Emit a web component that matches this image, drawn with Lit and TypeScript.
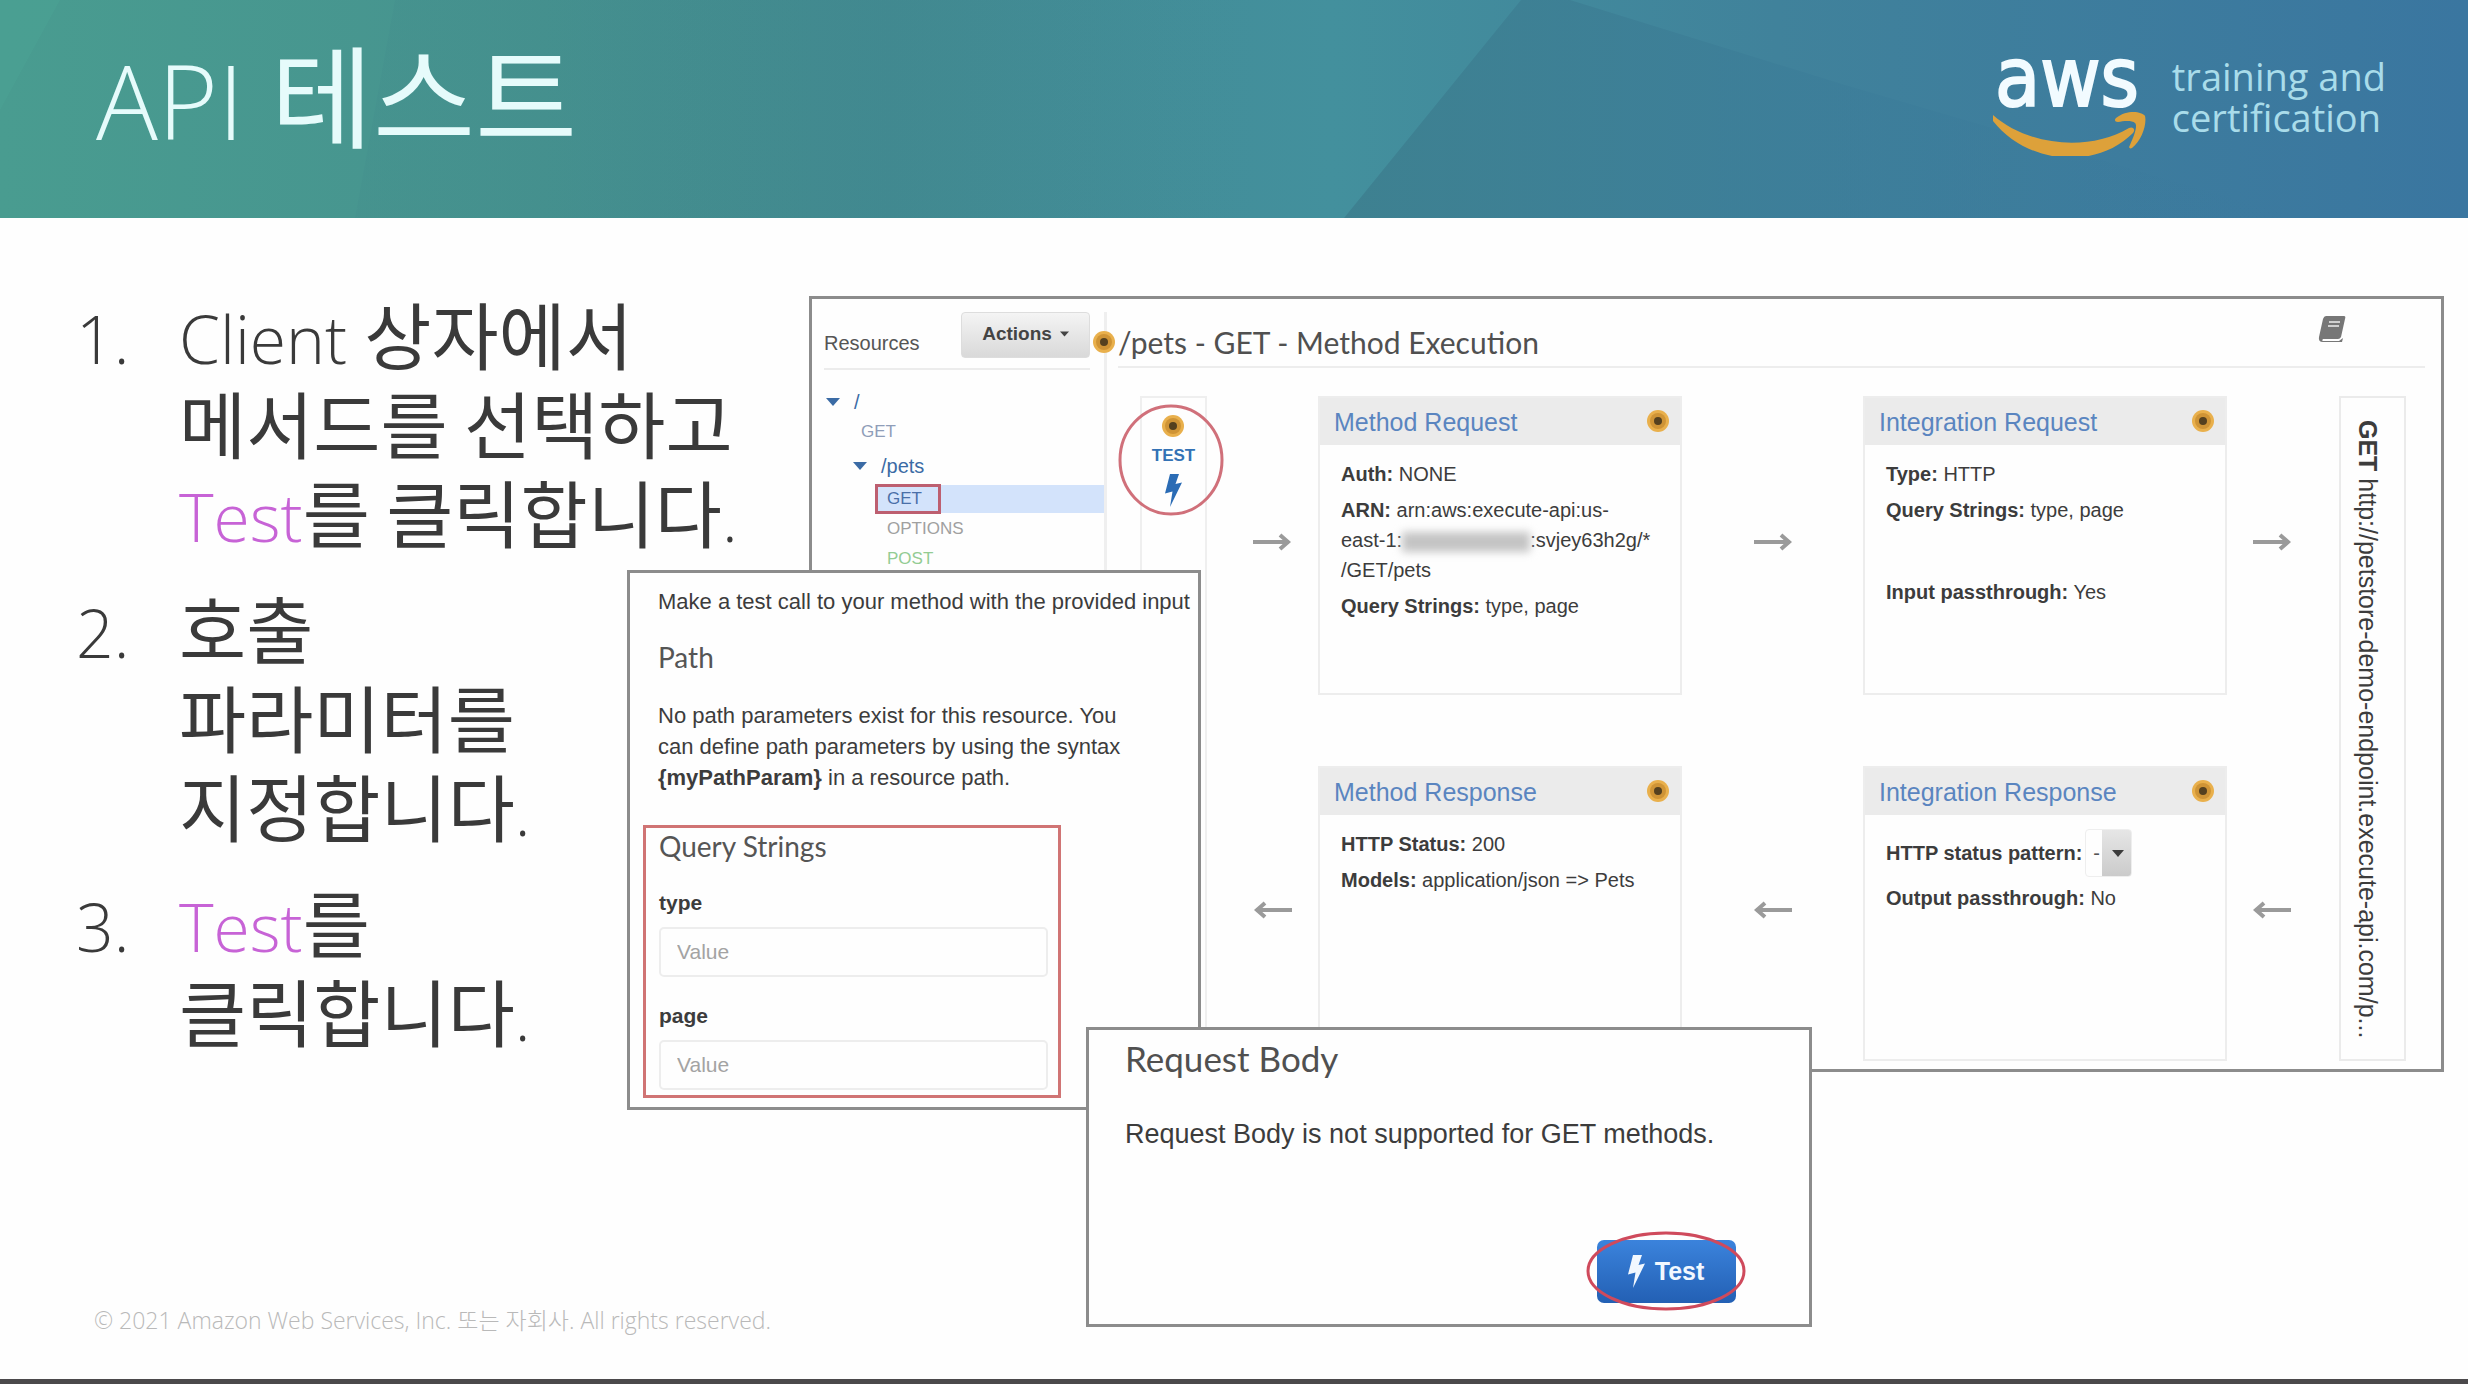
import { LitElement, html, css, svg, type TemplateResult } from "lit";
import { customElement } from "lit/decorators.js";

const dot = () => html`
  <svg class="dot" viewBox="0 0 24 24" aria-hidden="true">
    <circle cx="12" cy="12" r="11" fill="#e9b04c" />
    <circle cx="12" cy="12" r="8" fill="#cf9436" />
    <circle cx="12" cy="12" r="4" fill="#54401f" />
  </svg>
`;

const boltPath = svg`<path d="M8 0 L17 0 L13.5 10 L20 8.5 L8 33 L10.5 17.5 L3 19.5 Z" />`;
const bolt = (name: string) => html`
  <svg class=${name} viewBox="0 0 22 33" fill="currentColor" aria-hidden="true">${boltPath}</svg>
`;

const arrow = (direction: "right" | "left", place: string) => html`
  <div class="arrow ${place}">
    <svg viewBox="0 0 38 18" aria-hidden="true">
      ${direction === "right"
        ? svg`<path d="M0 9H34M27 2L35 9L27 16" />`
        : svg`<path d="M38 9H4M11 2L3 9L11 16" />`}
    </svg>
  </div>
`;

const caret = () => html`
  <svg class="caret" viewBox="0 0 14 8" aria-hidden="true"><path d="M0 0H14L7 8Z" fill="currentColor" /></svg>
`;

const card = (place: string, title: string, body: TemplateResult) => html`
  <section class="card ${place}">
    <header class="card-head">
      <h3><a href="#${place}">${title}</a></h3>
      ${dot()}
    </header>
    <div class="card-body">${body}</div>
  </section>
`;

const ko = (text: string) => html`<span class="ko">${text}</span>`;

@customElement("app-root")
export class AppRoot extends LitElement {
  static styles = css`
    :host {
      display: block;
      color: #3c3c3c;
      background: #fefefe;
      font-family: "Liberation Sans", "Noto Sans CJK KR", sans-serif;
      font-size: 20px;
      line-height: 30px;
    }
    *, ::before, ::after {
      box-sizing: border-box;
    }
    h1, h2, h3, p, ol, ul {
      margin: 0;
      padding: 0;
      font-weight: 400;
    }
    ol, ul {
      list-style: none;
    }
    a {
      color: inherit;
      text-decoration: none;
    }
    svg {
      display: block;
      flex: none;
    }
    .slide {
      display: flex;
      flex-direction: column;
      min-height: 100vh;
      overflow: hidden;
      border-bottom: 5px solid #4b494b;
    }
    .ko {
      font-family: "Noto Sans CJK KR", sans-serif;
      line-height: 0;
    }

    .banner {
      position: relative;
      display: flex;
      align-items: center;
      justify-content: space-between;
      height: 218px;
      padding: 0 82px 18px 96px;
      color: #e6fbfb;
      background: linear-gradient(90deg, #499c90 0%, #46938f 22%, #428a92 36%, #43909d 54%, #40829b 72%, #3a76a0 100%);
    }
    .facets {
      position: absolute;
      inset: 0;
      width: 100%;
      height: 100%;
    }
    .banner h1 {
      position: relative;
      font-family: "Open Sans", sans-serif;
      font-weight: 300;
      font-size: 103px;
      line-height: 100px;
    }
    .banner .ko {
      font-size: 111px;
      font-weight: 400;
    }
    .brand {
      position: relative;
      display: flex;
      align-items: center;
      gap: 26px;
    }
    .logo {
      width: 154px;
      height: 128px;
      margin-bottom: 16px;
    }
    .tagline {
      padding-bottom: 6px;
      color: #a9dcea;
      font-family: "Open Sans", sans-serif;
      font-weight: 400;
      font-size: 38px;
      line-height: 41px;
    }

    .stage {
      position: relative;
      display: flex;
      flex: 1;
      align-items: flex-start;
    }
    .steps {
      display: flex;
      flex: 0 0 809px;
      flex-direction: column;
      gap: 27px;
      padding: 76px 0 0 76px;
      color: #3a3a3a;
      font-family: "Open Sans", sans-serif;
      font-weight: 300;
      font-size: 66px;
      line-height: 89px;
      counter-reset: step;
      white-space: nowrap;
    }
    .steps li {
      display: grid;
      grid-template-columns: 103px 1fr;
      counter-increment: step;
    }
    .steps li::before {
      content: counter(step) ".";
    }
    .steps .ko {
      font-size: 73px;
      font-weight: 400;
    }
    .steps em {
      color: #c763d6;
      font-style: normal;
    }

    .window {
      border: 3px solid #8c8c8c;
      background: #fefefe;
    }
    .console {
      display: flex;
      flex: 1;
      margin: 78px 24px 0 0;
    }
    .sidebar {
      flex: 0 0 295px;
      margin-top: 13px;
      padding-left: 12px;
      border-right: 3px solid #efefef;
      color: #8f9db8;
      font-size: 17px;
    }
    .sidebar-head {
      display: flex;
      justify-content: space-between;
      align-items: center;
      height: 58px;
      margin-right: 14px;
      padding-bottom: 10px;
      border-bottom: 2px solid #ececec;
      color: #555;
      font-size: 20px;
    }
    .sidebar-head h2 {
      padding-top: 16px;
      font-size: 20px;
    }
    .actions {
      display: flex;
      align-items: center;
      justify-content: center;
      gap: 8px;
      width: 129px;
      height: 46px;
      padding: 0 0 2px;
      border: 1px solid #ddd;
      border-radius: 4px;
      color: #444;
      background: linear-gradient(#f4f4f4, #d9d9d9);
      font: bold 19px "Liberation Sans", sans-serif;
    }
    .actions .caret {
      width: 9px;
      height: 6px;
    }
    .tree {
      padding-top: 17px;
    }
    .tree li {
      display: flex;
      align-items: center;
      height: 30px;
    }
    .tree .caret {
      width: 14px;
      height: 8px;
      color: #3b6ba5;
    }
    .root, .branch {
      gap: 14px;
      padding-left: 2px;
      color: #3b6ba5;
      font-size: 20px;
    }
    .tree .branch {
      height: 37px;
      padding-left: 29px;
    }
    .tree .leaf {
      padding-left: 37px;
    }
    .tree .deep {
      padding-left: 51px;
    }
    .tree .deep span {
      padding: 0 12px;
    }
    .picked span {
      flex: 1;
      height: 28px;
      background: #d3e3fb;
      line-height: 28px;
    }
    .picked {
      position: relative;
      color: #4a6fa8;
    }
    .picked::after {
      position: absolute;
      inset: 0 auto 0 51px;
      width: 66px;
      border: 3px solid #bd5f70;
      content: "";
    }
    .options {
      color: #a0a0a0;
    }
    .post {
      color: #93cc93;
    }

    .execution {
      position: relative;
      flex: 1;
      padding: 0 16px 8px 11px;
    }
    .execution > .dot {
      position: absolute;
      left: -15px;
      top: 31px;
    }
    .dot {
      width: 24px;
      height: 24px;
    }
    .execution-head {
      display: flex;
      align-items: center;
      justify-content: space-between;
      height: 69px;
      padding: 18px 79px 0 0;
      border-bottom: 2px solid #ededed;
    }
    .execution-head h2 {
      color: #505050;
      font-family: Lato, sans-serif;
      font-size: 30px;
      line-height: 36px;
    }
    .docs {
      width: 28px;
      height: 28px;
      margin-bottom: 26px;
    }
    .flow {
      display: grid;
      grid-template-columns: 67px 111fr 364fr 181fr 364fr 112fr 67px;
      grid-template-rows: 299px 295px;
      row-gap: 71px;
      padding: 28px 19px 0 22px;
    }
    .client {
      position: relative;
      display: flex;
      grid-area: 1 / 1 / 3 / 2;
      flex-direction: column;
      align-items: center;
      border: 2px solid #efefef;
      color: #3372b5;
      font-weight: bold;
      font-size: 17px;
    }
    .client a {
      display: flex;
      flex-direction: column;
      gap: 3px;
      align-items: center;
      padding-top: 16px;
    }
    .client .bolt {
      width: 22px;
      height: 33px;
      color: #2b6cb5;
    }
    .client .ring {
      position: absolute;
      top: 6px;
      left: -24px;
      width: 106px;
      height: 112px;
    }
    .endpoint {
      grid-area: 1 / 7 / 3 / 8;
      padding: 22px 10px 22px 0;
      border: 2px solid #ebebeb;
      font-size: 25px;
      line-height: 53px;
      white-space: nowrap;
      writing-mode: vertical-rl;
    }
    .arrow {
      display: flex;
      align-items: center;
      justify-content: center;
      padding-bottom: 8px;
    }
    .arrow svg {
      width: 38px;
      height: 18px;
      fill: none;
      stroke: #9a9a9a;
      stroke-width: 4;
    }
    .to-method { grid-area: 1 / 2; padding-left: 18px; }
    .to-integration { grid-area: 1 / 4; }
    .to-endpoint { grid-area: 1 / 6; padding-right: 22px; }
    .from-method { grid-area: 2 / 2; padding-left: 20px; }
    .from-integration { grid-area: 2 / 4; }
    .from-endpoint { grid-area: 2 / 6; padding-right: 22px; }
    .method-request { grid-area: 1 / 3; }
    .integration-request { grid-area: 1 / 5; }
    .method-response { grid-area: 2 / 3; }
    .integration-response { grid-area: 2 / 5; }
    .card {
      min-width: 0;
      border: 2px solid #ededed;
    }
    .card-head {
      display: flex;
      align-items: center;
      justify-content: space-between;
      height: 47px;
      padding: 0 10px 2px 14px;
      background: #ebebeb;
    }
    .card-head h3 {
      padding-top: 3px;
      color: #5a85c0;
      font-size: 25px;
    }
    .card-body {
      display: flex;
      flex-direction: column;
      gap: 6px;
      padding: 14px 0 0 21px;
      white-space: nowrap;
    }
    .spaced {
      padding-top: 46px;
    }
    .redacted {
      display: inline-block;
      width: 128px;
      height: 20px;
      background: #c4c4c4;
      filter: blur(4px);
      vertical-align: middle;
    }
    .pattern {
      display: flex;
      align-items: center;
      height: 48px;
    }
    .picker {
      display: grid;
      grid-template-columns: 18px 29px;
      margin-left: 3px;
      align-items: center;
    }
    .picker select {
      grid-area: 1 / 1 / 2 / 3;
      width: 47px;
      height: 48px;
      padding: 0 0 0 7px;
      border: 1px solid #eee;
      border-radius: 4px;
      color: #555;
      background: linear-gradient(#e6e6e6, #cbcbcb) right / 29px 100% no-repeat;
      font: 20px "Liberation Sans", sans-serif;
      appearance: none;
    }
    .picker .caret {
      z-index: 1;
      grid-area: 1 / 2;
      justify-self: center;
      width: 12px;
      height: 9px;
      pointer-events: none;
    }

    .test-call {
      position: absolute;
      top: 352px;
      left: 627px;
      width: 574px;
      padding: 13px 0 9px 13px;
      font-size: 22px;
      line-height: 31px;
    }
    .test-call p, .test-call .path {
      padding-left: 15px;
      white-space: nowrap;
    }
    .lato {
      color: #555;
      font-family: Lato, sans-serif;
      font-size: 28px;
      line-height: 36px;
    }
    .test-call .path {
      padding-top: 22px;
      padding-bottom: 25px;
    }
    .queries {
      width: 418px;
      margin-top: 32px;
      padding: 0 10px 5px 13px;
      border: 3px solid #d07474;
    }
    .queries label {
      display: block;
      padding: 24px 0 9px;
      font-weight: bold;
      font-size: 21px;
      line-height: 30px;
    }
    .queries input {
      display: block;
      width: 100%;
      height: 50px;
      padding: 0 16px;
      border: 2px solid #ededed;
      border-radius: 5px;
      background: #fefefe;
      font: 21px "Liberation Sans", sans-serif;
    }
    .queries input::placeholder {
      color: #a3a3a3;
    }

    .request-body {
      position: absolute;
      top: 809px;
      left: 1086px;
      display: flex;
      flex-direction: column;
      width: 726px;
      padding: 6px 73px 21px 36px;
    }
    .request-body h2 {
      color: #505050;
      font-family: Lato, sans-serif;
      font-size: 35px;
      line-height: 44px;
    }
    .request-body p {
      padding: 36px 0 88px;
      font-size: 27px;
      line-height: 36px;
      white-space: nowrap;
    }
    .run {
      position: relative;
      display: flex;
      align-items: center;
      align-self: flex-end;
      justify-content: center;
      gap: 8px;
      width: 139px;
      height: 63px;
      padding: 0 4px 0 0;
      border: 0;
      border-radius: 7px;
      color: #f2f8ff;
      background: linear-gradient(#3b83dc, #2360b4);
      font: bold 25px "Liberation Sans", sans-serif;
    }
    .run .bolt {
      width: 22px;
      height: 33px;
    }
    .run .ring {
      position: absolute;
      top: -9px;
      left: -11px;
      width: 161px;
      height: 81px;
    }

    .legal {
      padding: 0 94px 41px;
      color: #b9b9b9;
      font-family: "Open Sans", "Noto Sans CJK KR", sans-serif;
      font-weight: 300;
      font-size: 23px;
      line-height: 36px;
    }
  `;

  private banner() {
    return html`
      <header class="banner">
        <svg class="facets" viewBox="0 0 2468 218" preserveAspectRatio="none" aria-hidden="true">
          <defs>
            <linearGradient id="shade" x1="0" x2="1">
              <stop offset="0" stop-color="#3d7e8e" stop-opacity="0.85" />
              <stop offset="0.5" stop-color="#3c7d99" stop-opacity="0.7" />
              <stop offset="1" stop-color="#3a789d" stop-opacity="0" />
            </linearGradient>
            <linearGradient id="fade" x1="0" x2="1">
              <stop offset="0" stop-color="#3f858a" stop-opacity="0.16" />
              <stop offset="0.5" stop-color="#3f858a" stop-opacity="0.3" />
              <stop offset="1" stop-color="#3f858a" stop-opacity="0" />
            </linearGradient>
          </defs>
          <path d="M0 0H60L0 110Z" fill="#4fae9c" opacity="0.2" />
          <path d="M395 0L355 218H1240V0Z" fill="url(#fade)" />
          <path d="M1521 0L1344 218H2300L1845 85L1570 0Z" fill="url(#shade)" />
        </svg>
        <h1>API ${ko("테스트")}</h1>
        <div class="brand">
          <svg class="logo" viewBox="0 -24 154 128" role="img" aria-label="aws">
            <text x="3" y="54" fill="#f2fbff" stroke="#f2fbff" stroke-width="2" font-family="DejaVu Sans Condensed, Open Sans, sans-serif" font-size="82">aws</text>
            <path d="M1 63C36 94 97 100 137 76C141 74 144 78 141 81C104 118 36 113 1 69Z" fill="#dda13a" />
            <path d="M124 66C136 57 150 60 153 64C155 72 150 88 140 96C138 97 136 96 138 93C142 84 146 74 143 71C140 68 131 69 126 70C123 70 122 68 124 66Z" fill="#dda13a" />
          </svg>
          <div class="tagline">training and<br />certification</div>
        </div>
      </header>
    `;
  }

  private steps() {
    return html`
      <ol class="steps">
        <li><div>Client ${ko("상자에서")}<br />${ko("메서드를 선택하고")}<br /><em>Test</em>${ko("를 클릭합니다")}.</div></li>
        <li><div>${ko("호출")}<br />${ko("파라미터를")}<br />${ko("지정합니다")}.</div></li>
        <li><div><em>Test</em>${ko("를")}<br />${ko("클릭합니다")}.</div></li>
      </ol>
    `;
  }

  private console() {
    return html`
      <section class="window console">
        <nav class="sidebar">
          <div class="sidebar-head">
            <h2>Resources</h2>
            <button class="actions" type="button">Actions ${caret()}</button>
          </div>
          <ul class="tree">
            <li class="root">${caret()}<span>/</span></li>
            <li class="leaf">GET</li>
            <li class="branch">${caret()}<span>/pets</span></li>
            <li class="deep picked"><span>GET</span></li>
            <li class="deep options"><span>OPTIONS</span></li>
            <li class="deep post"><span>POST</span></li>
          </ul>
        </nav>
        <div class="execution">
          ${dot()}
          <div class="execution-head">
            <h2>/pets - GET - Method Execution</h2>
            <svg class="docs" viewBox="0 0 28 28" aria-hidden="true">
              <path d="M8 1H26Q28 1 27 4L23 22Q22 24 20 24H5Q3 26 6 26H21L25 23L24 27H5Q0 27 1 22L5 4Q6 1 8 1Z" fill="#777" />
              <path d="M11 7H22M10 11H21" stroke="#d0d0d0" stroke-width="2" />
            </svg>
          </div>
          <div class="flow">
            <div class="client">
              <a href="#test">${dot()}<span>TEST</span>${bolt("bolt")}</a>
              <svg class="ring" viewBox="0 0 106 112" aria-hidden="true">
                <ellipse cx="53" cy="56" rx="51" ry="54" fill="none" stroke="#d0707a" stroke-width="3" />
              </svg>
            </div>
            ${arrow("right", "to-method")}
            ${card("method-request", "Method Request", html`
              <p><b>Auth:</b> NONE</p>
              <p><b>ARN:</b> arn:aws:execute-api:us-<br />east-1:<span class="redacted"></span>:svjey63h2g/*<br />/GET/pets</p>
              <p><b>Query Strings:</b> type, page</p>
            `)}
            ${arrow("right", "to-integration")}
            ${card("integration-request", "Integration Request", html`
              <p><b>Type:</b> HTTP</p>
              <p><b>Query Strings:</b> type, page</p>
              <p class="spaced"><b>Input passthrough:</b> Yes</p>
            `)}
            ${arrow("right", "to-endpoint")}
            <div class="endpoint"><b>GET</b> http://petstore-demo-endpoint.execute-api.com/p...</div>
            ${arrow("left", "from-method")}
            ${card("method-response", "Method Response", html`
              <p><b>HTTP Status:</b> 200</p>
              <p><b>Models:</b> application/json =&gt; Pets</p>
            `)}
            ${arrow("left", "from-integration")}
            ${card("integration-response", "Integration Response", html`
              <div class="pattern">
                <label for="pattern"><b>HTTP status pattern:</b></label>
                <span class="picker">
                  <select id="pattern"><option>-</option></select>
                  ${caret()}
                </span>
              </div>
              <p><b>Output passthrough:</b> No</p>
            `)}
            ${arrow("left", "from-endpoint")}
          </div>
        </div>
      </section>
    `;
  }

  private testCall() {
    return html`
      <section class="window test-call">
        <p>Make a test call to your method with the provided input</p>
        <h2 class="lato path">Path</h2>
        <p>No path parameters exist for this resource. You<br />can define path parameters by using the syntax<br /><b>{myPathParam}</b> in a resource path.</p>
        <div class="queries">
          <h2 class="lato">Query Strings</h2>
          ${["type", "page"].map((name) => html`
            <label for=${name}>${name}</label>
            <input id=${name} type="text" placeholder="Value" />
          `)}
        </div>
      </section>
    `;
  }

  private requestBody() {
    return html`
      <section class="window request-body">
        <h2>Request Body</h2>
        <p>Request Body is not supported for GET methods.</p>
        <button class="run" type="button">
          ${bolt("bolt")}Test
          <svg class="ring" viewBox="0 0 161 81" aria-hidden="true">
            <ellipse cx="80" cy="40" rx="78" ry="38" fill="none" stroke="#cf4a5c" stroke-width="3" />
          </svg>
        </button>
      </section>
    `;
  }

  render() {
    return html`
      <div class="slide">
        ${this.banner()}
        <main class="stage">
          ${this.steps()} ${this.console()} ${this.testCall()} ${this.requestBody()}
        </main>
        <footer class="legal">© 2021 Amazon Web Services, Inc. 또는 자회사. All rights reserved.</footer>
      </div>
    `;
  }
}
